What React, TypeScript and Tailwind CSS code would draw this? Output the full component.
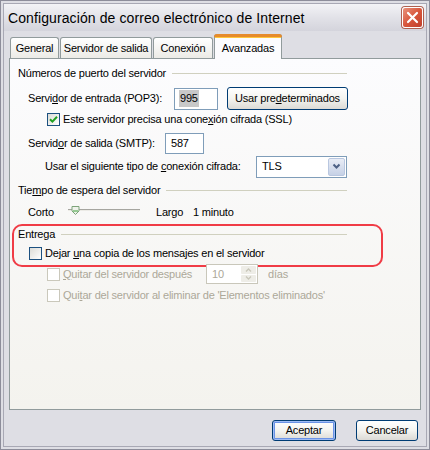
import React from 'react'

const font = { fontFamily: '"Liberation Sans", Arial, sans-serif' }

function CheckBox({ checked, disabled }: { checked?: boolean; disabled?: boolean }) {
  return (
    <span
      className={`inline-flex items-center justify-center w-[13px] h-[13px] shrink-0 border ${
        disabled ? 'border-[#cac8bb] bg-white' : 'border-[#1c5180] bg-gradient-to-br from-[#dcdcd7] to-white'
      }`}
    >
      {checked && (
        <svg width="9" height="9" viewBox="0 0 9 9">
          <path d="M1 4.2 L3.4 6.6 L8 1.8" stroke="#21a121" strokeWidth="2" fill="none" />
        </svg>
      )}
    </span>
  )
}

// linea de grupo con texto
function GroupHeader({ children }: { children: React.ReactNode }) {
  return (
    <div className="flex items-center h-[16px] w-[329px]">
      <span className="whitespace-nowrap pr-[6px]">{children}</span>
      <div className="flex-1 h-px bg-[#d0d0bf]" />
    </div>
  )
}

function Tab({ label, active, w }: { label: string; active?: boolean; w: string }) {
  if (active) {
    return (
      <div className={`relative z-10 -mb-px h-[25px] ${w} bg-[#fcfcfe] border border-[#919b9c] border-b-0 rounded-t-[3px] flex justify-center pt-[3px]`}>
        <div className="absolute left-[-1px] right-[-1px] top-[-1px] h-[3px] rounded-t-[3px] bg-[#e68b2c]" />
        <div className="absolute left-0 right-0 top-[2px] h-px bg-[#ffc73c]" />
        <span className="mt-[2px] whitespace-nowrap">{label}</span>
      </div>
    )
  }
  return (
    <div className={`h-[21px] ${w} bg-gradient-to-b from-white to-[#ecebe6] border border-[#919b9c] border-b-0 rounded-t-[3px] flex items-center justify-center whitespace-nowrap`}>
      {label}
    </div>
  )
}

function XPButton({ children, def, w }: { children: React.ReactNode; def?: boolean; w: string }) {
  return (
    <div
      className={`${w} rounded-[3px] border border-[#003c74] bg-gradient-to-b from-white via-[#f4f4f0] to-[#dcdad5] flex items-center justify-center whitespace-nowrap ${
        def ? 'shadow-[inset_0_0_0_1px_#9fbcf5,inset_0_0_0_2px_#6b93e6]' : ''
      }`}
    >
      {children}
    </div>
  )
}

export default function App() {
  return (
    <div style={font} className="w-[430px] h-[450px] text-[11px] tracking-[-0.2px] text-black bg-white">
      <div className="w-full h-full border border-[#8d8d9a] bg-[#dedee4] p-[2px]">
        <div className="w-full h-full border border-[#a8a8b4] flex flex-col">
          {/* Title bar */}
          <div className="h-[27px] shrink-0 bg-gradient-to-b from-[#f3f3f6] via-[#e2e2e8] to-[#d4d4dc] flex items-center justify-between pl-[4px] pr-[3px]">
            <span className="text-[14px] tracking-[0.1px] leading-none">Configuración de correo electrónico de Internet</span>
            <div className="w-[21px] h-[21px] rounded-[3px] border border-white bg-gradient-to-br from-[#e8927c] via-[#d8563c] to-[#c0402c] flex items-center justify-center shadow-[0_0_0_1px_#b06050]">
              <svg width="13" height="13" viewBox="0 0 13 13">
                <path d="M2 2 L11 11 M11 2 L2 11" stroke="white" strokeWidth="2.2" strokeLinecap="round" />
              </svg>
            </div>
          </div>

          {/* Body */}
          <div className="flex-1 flex flex-col px-[5px]">
            {/* Tabs */}
            <div className="h-[26px] flex items-end gap-[1px] pl-[1px] mt-[1px]">
              <Tab label="General" w="w-[49px]" />
              <Tab label="Servidor de salida" w="w-[92px]" />
              <Tab label="Conexión" w="w-[60px]" />
              <Tab active label="Avanzadas" w="w-[68px]" />
            </div>

            {/* Panel */}
            <div className="h-[352px] w-[412px] border border-[#919b9c] bg-gradient-to-b from-[#fcfcfe] to-[#f4f3ee] pl-[8px] pt-[6px]">
              <GroupHeader>Números de puerto del servidor</GroupHeader>

              <div className="flex items-center h-[23px] mt-[6px] pl-[10px]">
                <span className="w-[146px] shrink-0 whitespace-nowrap">
                  Servi<u>d</u>or de entrada (POP3):
                </span>
                <div className="w-[44px] h-[22px] border border-[#7f9db9] bg-white flex items-center pl-[4px]">
                  <span className="bg-[#c8c8c8] px-[1px]">995</span>
                </div>
                <div className="ml-[9px]">
                  <XPButton w="w-[121px] h-[23px]">
                    Usar pre<u>d</u>eterminados
                  </XPButton>
                </div>
              </div>

              <div className="flex items-center h-[14px] mt-[2px] pl-[29px] gap-[3px]">
                <CheckBox checked />
                <span className="whitespace-nowrap">
                  Este servidor precisa una cone<u>x</u>ión cifrada (SSL)
                </span>
              </div>

              <div className="flex items-center h-[21px] mt-[7px] pl-[10px]">
                <span className="w-[137px] shrink-0 whitespace-nowrap">
                  Servid<u>o</u>r de salida (SMTP):
                </span>
                <div className="w-[39px] h-[21px] border border-[#7f9db9] bg-white flex items-center pl-[5px]">587</div>
              </div>

              <div className="flex items-center h-[23px] mt-[1px] pl-[27px]">
                <span className="w-[211px] shrink-0 whitespace-nowrap">
                  Usar el siguiente tipo de <u>c</u>onexión cifrada:
                </span>
                <div className="w-[91px] h-[22px] border border-[#7f9db9] bg-white flex items-center justify-between pl-[5px] pr-[1px]">
                  <span>TLS</span>
                  <div className="w-[17px] h-[18px] rounded-[2px] border border-[#b9c7e0] bg-gradient-to-b from-[#e9edf6] to-[#c6d1e6] flex items-center justify-center">
                    <svg width="9" height="7" viewBox="0 0 9 7">
                      <path d="M1.5 1.5 L4.5 4.5 L7.5 1.5" stroke="#4d6185" strokeWidth="2" fill="none" />
                    </svg>
                  </div>
                </div>
              </div>

              <div className="mt-[4px]">
                <GroupHeader>
                  Tie<u>m</u>po de espera del servidor
                </GroupHeader>
              </div>

              <div className="flex items-center h-[16px] mt-[6px] pl-[10px]">
                <span className="w-[40px]">Corto</span>
                <svg width="72" height="14" viewBox="0 0 72 14">
                  <line x1="0" y1="4.5" x2="72" y2="4.5" stroke="#a6a6a0" strokeWidth="1" />
                  <line x1="0" y1="5.5" x2="72" y2="5.5" stroke="#ecebe6" strokeWidth="1" />
                  <path d="M4 1.5 H11 V6 L7.5 9.5 L4 6 Z" fill="#eef2ea" stroke="#7da37a" strokeWidth="1" />
                  <line x1="5" y1="6" x2="10" y2="6" stroke="#3ea23c" strokeWidth="1" />
                </svg>
                <span className="ml-[16px] w-[37px]">Largo</span>
                <span>1 minuto</span>
              </div>

              {/* Recuadro rojo */}
              <div className="mt-[4px] -ml-[6px] w-[371px] h-[43px] border-2 border-[#f03c46] rounded-[10px] pl-[4px]">
                <GroupHeader>Entrega</GroupHeader>
                <div className="flex items-center h-[14px] mt-[4px] pl-[11px] gap-[3px]">
                  <CheckBox />
                  <span className="whitespace-nowrap">
                    Dejar <u>u</u>na copia de los mensajes en el servidor
                  </span>
                </div>
              </div>

              <div className="flex items-center h-[20px] -mt-[3px] pl-[29px] text-[#aca899]">
                <CheckBox disabled />
                <span className="w-[146px] shrink-0 pl-[3px] whitespace-nowrap">
                  <u>Q</u>uitar del servidor después
                </span>
                <div className="w-[52px] h-[20px] border border-[#c9c7ba] bg-white flex items-center justify-between pl-[5px] pr-[1px]">
                  <span>10</span>
                  <div className="w-[15px] h-[16px] flex flex-col gap-px">
                    <div className="flex-1 rounded-[1px] bg-[#eeede7] flex items-center justify-center">
                      <svg width="7" height="4" viewBox="0 0 7 4">
                        <path d="M1 3.5 L3.5 1 L6 3.5" stroke="#c9c7ba" strokeWidth="1.3" fill="none" />
                      </svg>
                    </div>
                    <div className="flex-1 rounded-[1px] bg-[#eeede7] flex items-center justify-center">
                      <svg width="7" height="4" viewBox="0 0 7 4">
                        <path d="M1 0.5 L3.5 3 L6 0.5" stroke="#c9c7ba" strokeWidth="1.3" fill="none" />
                      </svg>
                    </div>
                  </div>
                </div>
                <span className="ml-[10px]">días</span>
              </div>

              <div className="flex items-center h-[14px] mt-[4px] pl-[29px] gap-[3px] text-[#aca899]">
                <CheckBox disabled />
                <span className="whitespace-nowrap">
                  Qui<u>t</u>ar del servidor al eliminar de 'Elementos eliminados'
                </span>
              </div>
            </div>

            {/* Botones */}
            <div className="flex justify-end gap-[20px] mt-[10px] pr-[3px]">
              <XPButton def w="w-[64px] h-[21px]">
                Aceptar
              </XPButton>
              <XPButton w="w-[62px] h-[21px]">Cancelar</XPButton>
            </div>
          </div>
        </div>
      </div>
    </div>
  )
}
